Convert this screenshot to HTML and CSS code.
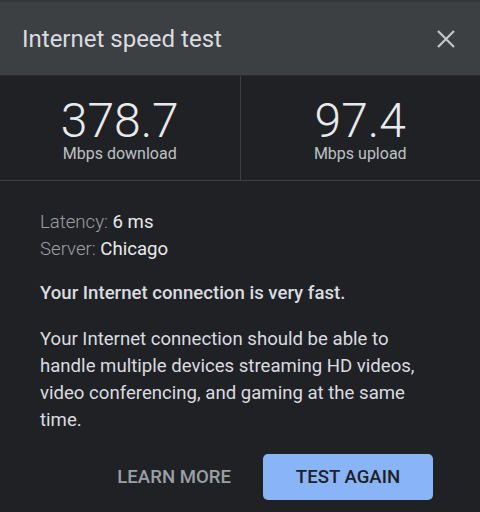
FILE: index.html
```html
<!DOCTYPE html>
<html lang="en">
<head>
    <meta charset="UTF-8">
    <meta name="viewport" content="width=device-width, initial-scale=1.0">
    <title>Internet speed test</title>
    <link rel="stylesheet" href="styles.css">
</head>
<body>
    <div class="dialog">
        <div class="header">
            <h2>Internet speed test</h2>
            <button class="close" aria-label="Close">
                <svg width="20" height="20" viewBox="0 0 20 20">
                    <path d="M2 2 L18 18 M18 2 L2 18" stroke="#c4c7c9" stroke-width="2.2" fill="none"/>
                </svg>
            </button>
        </div>

        <div class="stats">
            <div class="stat">
                <div class="value">378.7</div>
                <div class="unit">Mbps download</div>
            </div>
            <div class="stat">
                <div class="value">97.4</div>
                <div class="unit">Mbps upload</div>
            </div>
        </div>

        <div class="content">
            <div class="meta">
                <div><span class="label">Latency:</span> 6 ms</div>
                <div><span class="label">Server:</span> Chicago</div>
            </div>
            <p class="verdict">Your Internet connection is very fast.</p>
            <p class="desc">Your Internet connection should be able to handle multiple devices streaming HD videos, video conferencing, and gaming at the same time.</p>
            <div class="actions">
                <button class="link">LEARN MORE</button>
                <button class="primary">TEST AGAIN</button>
            </div>
        </div>
    </div>
</body>
</html>
```

FILE: styles.css
```css
body {
    margin: 0;
    background-color: #202124;
    font-family: Roboto, "Liberation Sans", sans-serif;
    color: #e8eaed;
}
.dialog {
    width: 480px;
    height: 512px;
    overflow: hidden;
}
.header {
    background-color: #3c4043;
    border-top: 2px solid #35383b;
    display: flex;
    align-items: center;
    justify-content: space-between;
    padding: 0 24px 0 22px;
    box-sizing: border-box;
    height: 75px;
}
.header h2 {
    margin: 0;
    font-size: 24px;
    font-weight: 400;
    color: #dadce0;
}
.close {
    background: none;
    border: none;
    padding: 0;
    width: 20px;
    height: 20px;
    cursor: pointer;
}
.stats {
    display: flex;
    border-top: 1px solid #2a2b2e;
    border-bottom: 1px solid #3c4043;
    height: 104px;
}
.stat {
    flex: 1;
    display: flex;
    flex-direction: column;
    align-items: center;
    justify-content: center;
}
.stat + .stat {
    border-left: 1px solid #3c4043;
}
.value {
    font-size: 48px;
    font-weight: 300;
    line-height: 46px;
    color: #e8eaed;
    margin-top: 6px;
}
.unit {
    font-size: 16px;
    line-height: 20px;
    color: #bdc1c6;
}
.content {
    padding: 28px 40px 0 40px;
    font-size: 18.6px;
}
.meta {
    line-height: 27px;
}
.label {
    font-weight: 300;
    color: #9aa0a6;
}
.verdict {
    margin: 19px 0 0 0;
    font-weight: 500;
    color: #dadce0;
}
.desc {
    margin: 22px 0 0 0;
    line-height: 27px;
    color: #dadce0;
}
.actions {
    display: flex;
    justify-content: flex-end;
    align-items: center;
    gap: 32px;
    margin-top: 20px;
    padding-right: 7px;
}
.actions button {
    font-family: Roboto, "Liberation Sans", sans-serif;
    font-size: 18.6px;
    font-weight: 500;
    border: none;
    cursor: pointer;
}
.link {
    background: none;
    color: #9aa0a6;
    padding: 0;
}
.primary {
    background-color: #8ab4f8;
    color: #202124;
    width: 170px;
    height: 46px;
    border-radius: 5px;
}
```
